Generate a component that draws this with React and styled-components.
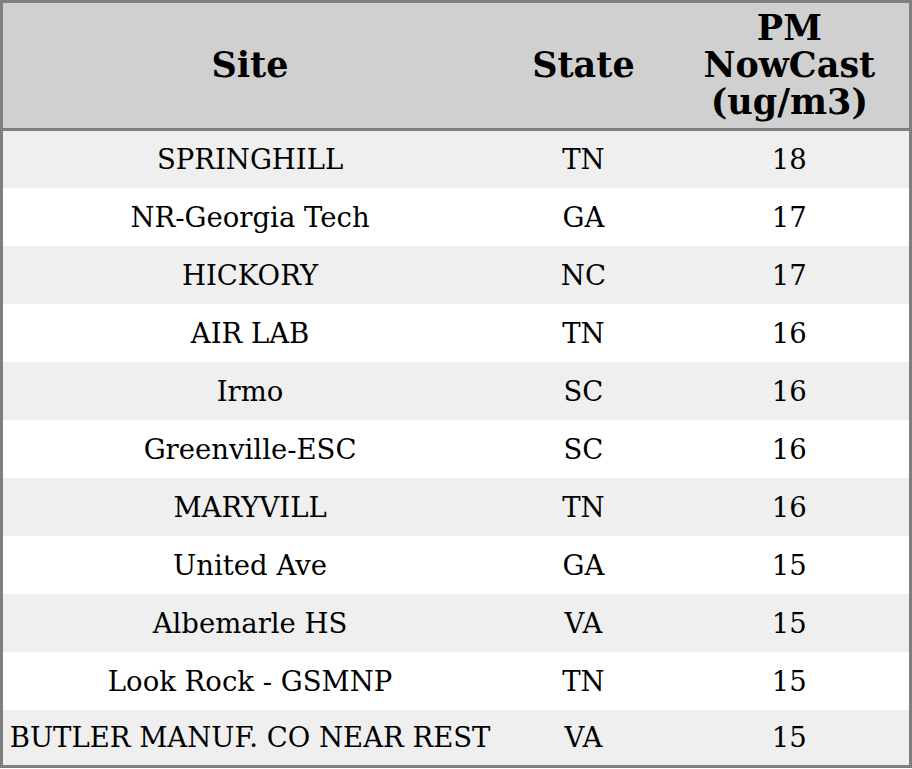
import styled, { createGlobalStyle } from "styled-components"

const GlobalStyle = createGlobalStyle`
    body{
        margin: 0;
        background: #ffffff;
        font-family: "DejaVu Serif", serif;
    }
`

const rows = [
    ["SPRINGHILL", "TN", 18],
    ["NR-Georgia Tech", "GA", 17],
    ["HICKORY", "NC", 17],
    ["AIR LAB", "TN", 16],
    ["Irmo", "SC", 16],
    ["Greenville-ESC", "SC", 16],
    ["MARYVILL", "TN", 16],
    ["United Ave", "GA", 15],
    ["Albemarle HS", "VA", 15],
    ["Look Rock - GSMNP", "TN", 15],
    ["BUTLER MANUF. CO NEAR REST", "VA", 15],
]

export default function App() {
    return (
        <>
            <GlobalStyle />
            <Table>
                <colgroup>
                    <col style={{ width: 494 }} />
                    <col style={{ width: 172 }} />
                    <col style={{ width: 240 }} />
                </colgroup>
                <thead>
                    <tr>
                        <Head>Site</Head>
                        <Head>State</Head>
                        <Head>PM<br />NowCast<br />(ug/m3)</Head>
                    </tr>
                </thead>
                <tbody>
                    {rows.map((r, i) => (
                        <Row key={r[0]} $shade={i % 2 === 0}>
                            <Cell>{r[0]}</Cell>
                            <Cell>{r[1]}</Cell>
                            <Cell>{r[2]}</Cell>
                        </Row>
                    ))}
                </tbody>
            </Table>
        </>
    )
}

const Table = styled.table`
    width: 912px;
    border-collapse: collapse;
    border: 3px solid #808080;
    table-layout: fixed;
    color: #000000;
`

const Head = styled.th`
    background: #d0d0d0;
    font-size: 35px;
    font-weight: 700;
    line-height: 37px;
    padding: 6px 2px 8px;
    height: 125px;
    box-sizing: border-box;
    text-align: center;
    border-bottom: 3px solid #808080;
`

const Row = styled.tr`
    background: ${props => props.$shade ? "#efefef" : "#ffffff"};
    height: 58px;

    &:last-child{
        height: 57px;
    }
`

const Cell = styled.td`
    font-size: 27.5px;
    line-height: 28px;
    padding: 0 2px;
    text-align: center;
    white-space: nowrap;
`
